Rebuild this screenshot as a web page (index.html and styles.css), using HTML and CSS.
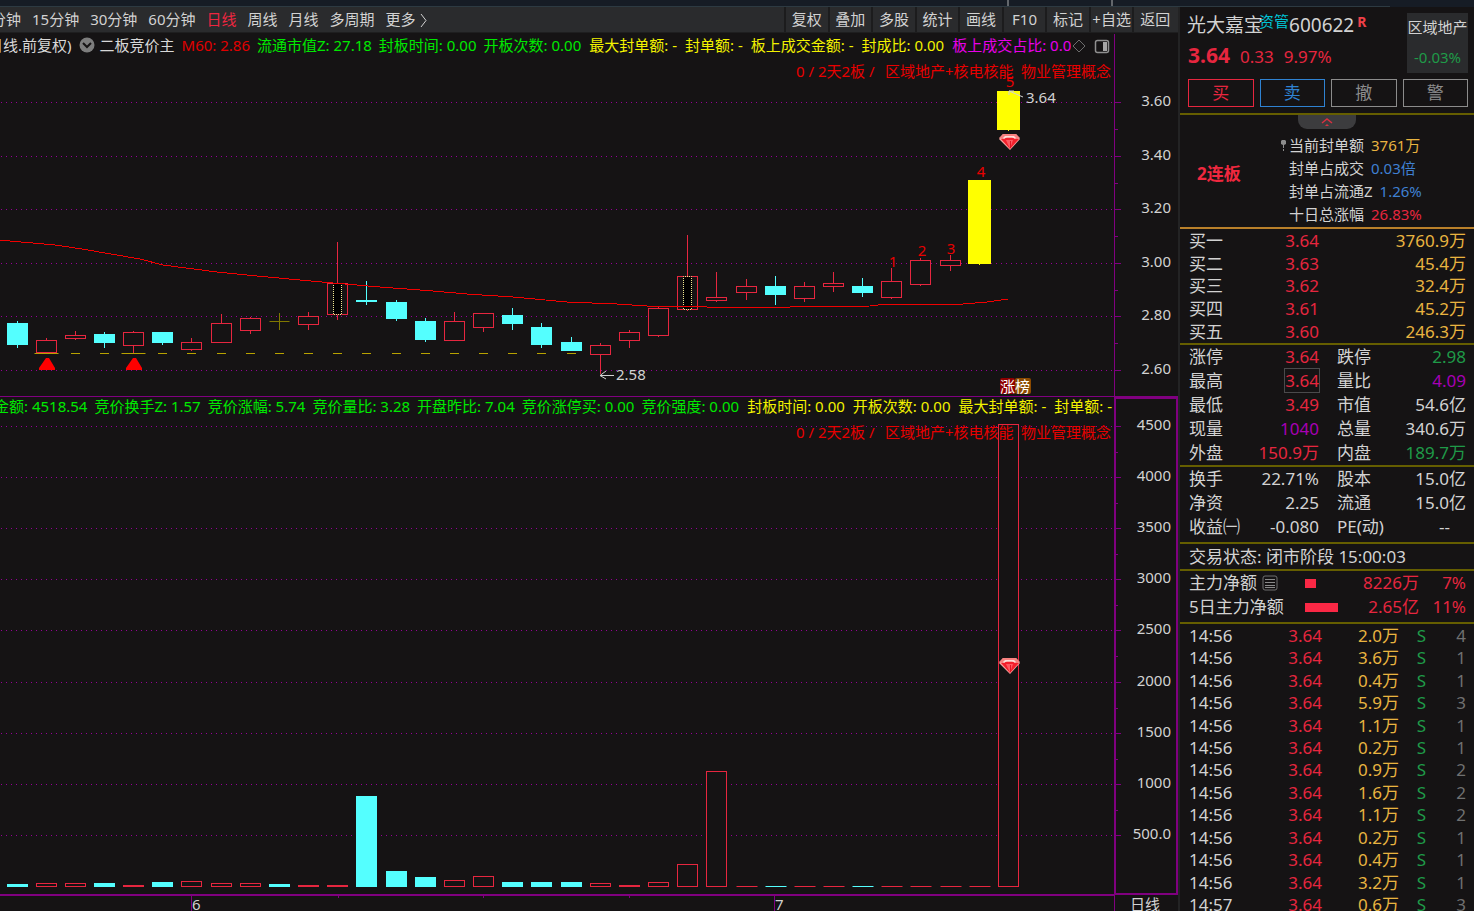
FILE: index.html
```html
<!DOCTYPE html>
<html lang="zh-CN">
<head>
<meta charset="utf-8">
<title>光大嘉宝 600622</title>
<link rel="stylesheet" href="styles.css">
</head>
<body>
<div class="app">
  <div class="strip"><div class="strip-line"><i></i><i></i></div></div>

  <main class="stage">
    <nav class="toolbar">
      <div class="periods">
        <button>分钟</button><button>15分钟</button><button>30分钟</button><button>60分钟</button><button class="active">日线</button><button>周线</button><button>月线</button><button>多周期</button><button>更多 <svg class="more" viewBox="0 0 8 15"><path d="M1 1 L6 7.500 L1 14"/></svg></button>
      </div>
      <div class="tools">
        <button>复权</button><button>叠加</button><button>多股</button><button>统计</button><button>画线</button><button>F10</button><button>标记</button><button>+自选</button><button>返回</button>
      </div>
    </nav>

    <section class="panel price">
      <svg class="plot" viewBox="0 33 1178 364" preserveAspectRatio="xMinYMin meet">
        <g id="price-grid"></g>
        <path class="frame" d="M1114.500 34V397"/>
        <path class="frame" d="M0 396.500H1178"/>
        <g id="candles"></g>
        <polyline class="ma" points="0,240 10,241 55,245 82,249 140,259 163,265 217,272 257,276 300,280 333,283 380,287 433,291 467,294 513,297 567,302 617,304 647,306 700,306 707,307 790,307 870,306 887,304 963,304 987,302 1008,299"/>
        <g id="support"></g>
        <path class="mark" d="M46 358h3l6 10v2H39v-2zM133 358h3l6 10v2h-16v-2z"/>
        <text class="caption" y="77"><tspan x="796">0 / 2天2板 /</tspan><tspan x="885">区域地产+核电核能</tspan><tspan x="1021">物业管理概念</tspan></text>
        <g class="count">
          <text x="893" y="267">1</text><text x="922" y="256">2</text><text x="951" y="254">3</text><text x="981" y="177">4</text><text x="1010" y="87">5</text>
        </g>
        <path class="arrow" d="M600 375.500H614M606 371L600 375.500L606 379"/>
        <text class="label" x="616" y="380">2.58</text>
        <path class="arrow" d="M1009 91L1023 97M1009 95V91H1014"/>
        <text class="label" x="1026" y="103">3.64</text>
        <g id="gem">
          <path fill="#f9a9a4" d="M1003 134h13l4 5-10 11-11-11z"/>
          <path fill="#f3202c" d="M1001 139l4-1h10l4 1-9 10z"/>
          <path fill="#f7817f" d="M1003 134h13l4 4-4 1-3-3h-7l-3 3-4-1z"/>
          <path fill="#ffdcd8" d="M1005 136h9l2 2-1 1-3-2h-5l-3 2-1-1z"/>
          <path fill="#ff5a62" d="M1006 140h7l-3 9z"/>
          <path fill="#e01424" d="M1010 141h1v7h-1z"/>
        </g>
        <rect x="1000" y="378" width="15" height="16" rx="2" fill="#8d0000"/>
        <rect x="1015" y="378" width="16" height="16" rx="2" fill="#8c4a00"/>
        <text class="badge" x="1000" y="392">涨榜</text>
      </svg>
      <div class="legend top">
        <div class="series">
          <span class="w cut-a">日线.前复权)</span>
          <svg class="drop" viewBox="0 0 16 16"><circle cx="8" cy="8" r="7.500" fill="#7d7d7d"/><path d="M4 6l4 4 4-4" fill="none" stroke="#151314" stroke-width="2"/></svg>
          <span class="w name">二板竞价主</span><span class="r">M60: 2.86</span><span class="g">流通市值Z: 27.18</span><span class="g">封板时间: 0.00</span><span class="g">开板次数: 0.00</span><span class="y">最大封单额: -</span><span class="y">封单额: -</span><span class="y">板上成交金额: -</span><span class="y">封成比: 0.00</span><span class="m">板上成交占比: 0.00</span>
        </div>
        <svg class="corner" viewBox="0 0 38 16"><path d="M7 2l6 6-6 6-6-6z" fill="none" stroke="#6c6c6c"/><rect x="23.500" y="2.500" width="13" height="12" rx="2" fill="none" stroke="#8f8f8f" stroke-width="1.500"/><rect x="31" y="4" width="4" height="9" fill="#a5a5a5"/></svg>
      </div>
    </section>

    <section class="panel volume">
      <svg class="plot" viewBox="0 397 1178 498" preserveAspectRatio="xMinYMin meet">
        <g id="volume-grid"></g>
        <g id="bars"></g>
        <rect class="frame thick" x="1115" y="398" width="62" height="496"/>
        <path class="frame" d="M0 894.500H1115"/>
        <text class="caption" y="438"><tspan x="796">0 / 2天2板 /</tspan><tspan x="885">区域地产+核电核能</tspan><tspan x="1021">物业管理概念</tspan></text>
        <use href="#gem" y="524"/>
      </svg>
      <div class="legend">
        <div class="series">
          <span class="g cut-b">金额: 4518.54</span><span class="g">竞价换手Z: 1.57</span><span class="g">竞价涨幅: 5.74</span><span class="g">竞价量比: 3.28</span><span class="g">开盘昨比: 7.04</span><span class="g">竞价涨停买: 0.00</span><span class="g">竞价强度: 0.00</span><span class="y">封板时间: 0.00</span><span class="y">开板次数: 0.00</span><span class="y">最大封单额: -</span><span class="y">封单额: -</span>
        </div>
      </div>
    </section>

    <svg class="plot dates" viewBox="0 895 1178 16" preserveAspectRatio="xMinYMin meet">
      <path class="frame" d="M0 895.500H1115M191.500 895V911M774.500 895V911M1114.500 895V911M338.500 895V898M483.500 895V898M629.500 895V898"/>
      <text class="label" x="192" y="910">6</text><text class="label" x="775" y="910">7</text><text class="label" x="1130" y="910">日线</text>
    </svg>
  </main>

  <aside class="side">
    <header class="quote">
      <div class="ident">
        <h1>光大嘉宝<sup class="tag">资管</sup>600622<sup class="flag">R</sup></h1>
        <p class="last"><b>3.64</b><span>0.33</span><span>9.97%</span></p>
      </div>
      <div class="sector"><span>区域地产</span><span class="down">-0.03%</span></div>
      <div class="actions"><button class="buy">买</button><button class="sell">卖</button><button>撤</button><button>警</button></div>
    </header>

    <section class="limit">
      <button class="fold" aria-label="收起"><svg viewBox="0 0 14 10"><path d="M2 6l5-4 5 4" fill="none" stroke="#d93040" stroke-width="1.500"/><path d="M5 9l2-2 2 2z" fill="#d93040"/></svg></button>
      <strong>2连板</strong>
      <ul>
        <li><svg class="pin" viewBox="0 0 5 11"><path d="M1 0h3l1 1v3L3 5v3H2V5L0 4V1zM2 9h1v2H2z"/></svg>当前封单额 <span class="gold">3761万</span></li>
        <li>封单占成交 <span class="blue">0.03倍</span></li>
        <li>封单占流通Z <span class="blue">1.26%</span></li>
        <li>十日总涨幅 <span class="up">26.83%</span></li>
      </ul>
    </section>

    <section class="block">
      <table class="bids">
        <tr><th>买一</th><td class="up">3.64</td><td class="gold">3760.9万</td></tr>
        <tr><th>买二</th><td class="up">3.63</td><td class="gold">45.4万</td></tr>
        <tr><th>买三</th><td class="up">3.62</td><td class="gold">32.4万</td></tr>
        <tr><th>买四</th><td class="up">3.61</td><td class="gold">45.2万</td></tr>
        <tr><th>买五</th><td class="up">3.60</td><td class="gold">246.3万</td></tr>
      </table>
    </section>

    <section class="block">
      <table class="stats">
        <tr><th>涨停</th><td class="up">3.64</td><th>跌停</th><td class="down">2.98</td></tr>
        <tr><th>最高</th><td class="up"><span class="boxed">3.64</span></td><th>量比</th><td class="violet">4.09</td></tr>
        <tr><th>最低</th><td class="up">3.49</td><th>市值</th><td>54.6亿</td></tr>
        <tr><th>现量</th><td class="violet">1040</td><th>总量</th><td>340.6万</td></tr>
        <tr><th>外盘</th><td class="up">150.9万</td><th>内盘</th><td class="down">189.7万</td></tr>
      </table>
    </section>

    <section class="block extra">
      <table class="stats">
        <tr><th>换手</th><td>22.71%</td><th>股本</th><td>15.0亿</td></tr>
        <tr><th>净资</th><td>2.25</td><th>流通</th><td>15.0亿</td></tr>
        <tr><th>收益㈠</th><td>-0.080</td><th>PE(动)</th><td class="none">--</td></tr>
      </table>
    </section>

    <p class="block status">交易状态: 闭市阶段 15:00:03</p>

    <section class="block extra">
      <table class="flow">
        <tr><th>主力净额<svg class="note" viewBox="0 0 16 16"><rect x="1" y="1" width="14" height="14" rx="2" fill="none" stroke="#6f6f6f"/><path d="M3 4.500h10M3 7.500h10M3 10.500h10M3 12.500h10" stroke="#8a8a8a"/></svg></th><td class="meter"><i style="width:11px"></i></td><td>8226万</td><td>7%</td></tr>
        <tr><th>5日主力净额</th><td class="meter"><i style="width:33px"></i></td><td>2.65亿</td><td>11%</td></tr>
      </table>
    </section>

    <section class="block ticks">
      <table class="trades">
        <tr><th>14:56</th><td>3.64</td><td>2.0万</td><td>S</td><td>4</td></tr>
        <tr><th>14:56</th><td>3.64</td><td>3.6万</td><td>S</td><td>1</td></tr>
        <tr><th>14:56</th><td>3.64</td><td>0.4万</td><td>S</td><td>1</td></tr>
        <tr><th>14:56</th><td>3.64</td><td>5.9万</td><td>S</td><td>3</td></tr>
        <tr><th>14:56</th><td>3.64</td><td>1.1万</td><td>S</td><td>1</td></tr>
        <tr><th>14:56</th><td>3.64</td><td>0.2万</td><td>S</td><td>1</td></tr>
        <tr><th>14:56</th><td>3.64</td><td>0.9万</td><td>S</td><td>2</td></tr>
        <tr><th>14:56</th><td>3.64</td><td>1.6万</td><td>S</td><td>2</td></tr>
        <tr><th>14:56</th><td>3.64</td><td>1.1万</td><td>S</td><td>2</td></tr>
        <tr><th>14:56</th><td>3.64</td><td>0.2万</td><td>S</td><td>1</td></tr>
        <tr><th>14:56</th><td>3.64</td><td>0.4万</td><td>S</td><td>1</td></tr>
        <tr><th>14:56</th><td>3.64</td><td>3.2万</td><td>S</td><td>1</td></tr>
        <tr><th>14:57</th><td>3.64</td><td>0.6万</td><td>S</td><td>3</td></tr>
      </table>
    </section>
  </aside>
</div>
<script src="chart.js"></script>
</body>
</html>
```

FILE: styles.css
```css
* { box-sizing: border-box; margin: 0; padding: 0; }

body {
  background: #151314;
  color: #d2d2d2;
  font: 15px/22px "Noto Sans", "Noto Sans CJK SC", sans-serif;
  overflow: hidden;
}

button { background: none; border: 0; color: inherit; font: inherit; white-space: nowrap; cursor: pointer; }
svg { display: block; }
li { list-style: none; }
th { font-weight: 400; text-align: left; }
table { width: 100%; border-collapse: collapse; table-layout: fixed; }

.app {
  display: grid;
  grid-template: 7px minmax(0, 1fr) / minmax(0, 1fr) 296px;
  height: 100vh;
}

.strip { grid-column: 1 / -1; background: #161c25; }
.strip-line {
  display: flex;
  justify-content: flex-end;
  gap: 102px;
  height: 7px;
  margin-right: 84px;
  padding-right: 277px;
  border-bottom: 1px solid #2d3a42;
}
.strip-line i { width: 2px; height: 6px; background: #62666b; }

/* chart side */
.stage { display: grid; grid-template-rows: 26px minmax(0, 364fr) minmax(0, 498fr) 16px; min-width: 0; }

.toolbar {
  display: flex;
  justify-content: space-between;
  padding-right: 2px;
  background: #2a2b2d;
  border-bottom: 1px solid #1e1e1f;
  line-height: 20px;
  overflow: hidden;
}
.periods { display: flex; gap: 11px; margin-left: -9px; }
.periods .active { color: #ee2640; }
.more { display: inline-block; width: 8px; height: 15px; vertical-align: -3px; fill: none; stroke: #d2d2d2; }
.tools { display: grid; grid-template-columns: repeat(9, 1fr); width: 392px; }
.tools button { border-left: 2px solid #1c1c1d; }
.toolbar button { padding-bottom: 1px; }

.panel { display: grid; min-height: 0; }
.panel > * { grid-area: 1 / 1; }
.plot { width: 100%; height: 100%; min-height: 0; font-size: 15px; }

.legend {
  display: flex;
  align-self: start;
  margin-right: 64px;
  line-height: 19px;
  white-space: nowrap;
  z-index: 1;
  min-width: 0;
}
.legend.top { line-height: 24px; }
.series { display: flex; flex: 1; gap: 7px; min-width: 0; overflow: hidden; align-items: center; }
.series > * { flex: none; }
.cut-a { margin-left: -12px; }
.cut-b { margin-left: -6px; }
.name { margin-left: -2px; }
.drop { width: 16px; height: 16px; }
.corner { width: 38px; height: 16px; margin: 5px 4px 0 1px; }
.w { color: #d8d8d8; }
.r { color: #e00000; }
.g { color: #00e800; }
.y { color: #f2f200; padding-left: 1px; }
.m { color: #e800e8; padding-left: 1px; }

.frame { fill: none; stroke: #800080; }
.thick { stroke-width: 2; }
.gridline { stroke: #960096; stroke-dasharray: 1 4; }
.ma { fill: none; stroke: #f00000; stroke-width: 1; shape-rendering: crispEdges; }
.mark { fill: #ff0000; }
.caption { fill: #e80000; }
.count { fill: #e80000; text-anchor: middle; }
.label { fill: #d2d2d2; }
.axis { fill: #d2d2d2; text-anchor: end; }
.arrow { fill: none; stroke: #d2d2d2; }
.badge { fill: #ffffff; }
.rise { fill: #151314; stroke: #e6263f; }
.fall { fill: #54ffff; stroke: #54ffff; }
.surge { fill: #ffff00; stroke: #ffff00; }
.flat { fill: none; stroke: #807800; }
.inner { fill: #000000; stroke: #f0e890; stroke-dasharray: 1 1; stroke-dashoffset: 0.5; }
.base { stroke: #b8a200; }

/* quote side */
.side { border-left: 2px solid #232324; font-size: 17px; min-width: 0; overflow: hidden; }
.up { color: #e6263f; }
.down { color: #1f9a48; }
.gold { color: #e9b440; }
.blue { color: #3f80d2; }
.violet { color: #a800b4; }

.quote {
  display: grid;
  grid-template-columns: 1fr 61px;
  grid-template-rows: 60px 28px;
  height: 106px;
  padding: 6px 6px 0 7px;
  row-gap: 6px;
}
.quote h1 { height: 28px; font-size: 19px; font-weight: 400; line-height: 24px; white-space: nowrap; }
.quote sup { line-height: 0; vertical-align: 5px; }
.tag { margin-left: -4px; color: #00c4d4; font-size: 15px; }
.flag { margin-left: 3px; color: #f04048; font-size: 14px; font-weight: 700; }
.last { display: flex; gap: 10px; align-items: baseline; color: #e6263f; line-height: 28px; padding-left: 1px; }
.last b { font-size: 21px; }
.sector { display: flex; flex-direction: column; justify-content: space-between; height: 60px; padding: 3px 0 5px; background: #2a2b2d; font-size: 15px; text-align: center; white-space: nowrap; }
.actions { grid-column: 1 / -1; display: flex; gap: 6px; height: 28px; padding-left: 1px; }
.actions button { flex: 1; border: 1px solid #8c8c8c; color: #8c8c8c; line-height: 24px; }
.actions .buy { border-color: #e6263f; color: #e6263f; }
.actions .sell { border-color: #2f82d2; color: #2f82d2; }

.limit {
  position: relative;
  display: grid;
  grid-template-columns: 82px 1fr;
  align-items: center;
  padding: 18px 0 0 27px;
  border-top: 2px solid #655e00;
  height: 114px;
  font-size: 15px;
}
.limit strong { margin-left: -10px; padding-bottom: 12px; color: #f0283f; font-size: 17px; }
.limit li { display: flex; gap: 7px; position: relative; line-height: 23px; white-space: nowrap; }
.fold { position: absolute; top: 0; left: 118px; width: 58px; height: 14px; border-radius: 0 0 9px 9px; background: #3c3c3e; }
.fold svg { width: 14px; height: 10px; margin: 0 auto; }
.pin { position: absolute; left: -8px; top: 6px; width: 5px; height: 11px; fill: #8c8c8c; }

.block { border-top: 2px solid #655e00; padding: 0 8px 0 9px; }
.limit + .block { border-color: #b9802a; }
.bids { height: 114px; line-height: 21px; }
.bids td, .stats td, .flow td { text-align: right; }
.bids th { width: 60px; }
.bids td:nth-child(2) { width: 70px; }
.stats td, .stats th { line-height: 24px; height: 24px; white-space: nowrap; }
.stats th:nth-child(1) { width: 54px; }
.stats td:nth-child(2) { width: 76px; }
.stats th:nth-child(3) { width: 71px; padding-left: 18px; }
.stats .none { padding-right: 16px; }
.boxed { outline: 1px solid #4a4a4c; }
.extra { padding-bottom: 3px; }
.status { line-height: 25px; }
.flow th, .flow td { line-height: 24px; white-space: nowrap; }
.flow td { color: #e6263f; }
.flow th { width: 116px; }
.flow .meter { width: 45px; text-align: left; }
.flow td:nth-child(3) { width: 69px; }
.meter i { display: block; height: 9px; background: #fa2845; }
.note { display: inline-block; width: 16px; height: 16px; margin-left: 5px; vertical-align: -2px; }
.trades { height: 292px; line-height: 21px; }
.trades th { width: 60px; }
.trades td { text-align: right; }
.trades td:nth-child(2) { width: 73px; color: #e6263f; }
.trades td:nth-child(3) { width: 77px; color: #e9b440; }
.trades td:nth-child(4) { width: 27px; color: #1f9a48; }
.trades td:nth-child(5) { color: #707070; }
```

FILE: chart.js
```js
const NS = "http://www.w3.org/2000/svg";
const add = (parent, name, attrs, text) => {
  const el = document.createElementNS(NS, name);
  for (const key in attrs) el.setAttribute(key, attrs[key]);
  if (text) el.textContent = text;
  parent.appendChild(el);
};
const byId = (id) => document.getElementById(id);
const column = (i) => Math.floor(18 + i * 29.16) - 0.5;

function grid(id, labels, first, step) {
  const g = byId(id);
  labels.forEach((label, i) => {
    const y = Math.round(first + i * step) + 0.5;
    add(g, "path", { class: "gridline", d: `M1 ${y}H1114` });
    add(g, "path", { class: "frame", d: `M1115 ${y}h6` });
    if (i < labels.length - 1) {
      add(g, "path", { class: "frame", d: `M1115 ${Math.round(y + step / 2) + 0.5}h3` });
    }
    add(g, "text", { class: "axis", x: 1171, y: y + 3.5 }, label);
  });
}
grid("price-grid", ["3.60", "3.40", "3.20", "3.00", "2.80", "2.60"], 102, 53.5);
grid("volume-grid", ["4500", "4000", "3500", "3000", "2500", "2000", "1500", "1000", "500.0"], 426, 51.1);

// kind, body top, body bottom, wick top, wick bottom
const candles = [
  ["fall", 323, 344, 321, 348], ["rise", 340, 352, 338, 353], ["rise", 335, 338, 331, 340],
  ["fall", 334, 342, 332, 348], ["rise", 332, 345, 331, 353], ["fall", 332, 342, 332, 345],
  ["rise", 342, 349, 338, 351], ["rise", 323, 342, 314, 342], ["rise", 318, 330, 317, 334],
  ["flat", 321, 321, 313, 330], ["rise", 316, 324, 312, 330], ["rise", 283, 314, 242, 320],
  ["fall", 300, 301, 281, 305], ["fall", 302, 318, 300, 321], ["fall", 321, 339, 318, 342],
  ["rise", 321, 340, 312, 340], ["rise", 313, 327, 313, 332], ["fall", 315, 323, 308, 330],
  ["fall", 327, 344, 323, 348], ["fall", 342, 350, 337, 350], ["rise", 345, 354, 343, 374],
  ["rise", 332, 340, 330, 348], ["rise", 308, 335, 307, 337], ["rise", 276, 309, 235, 311],
  ["rise", 297, 300, 272, 302], ["rise", 286, 292, 279, 300], ["fall", 286, 294, 276, 305],
  ["rise", 286, 298, 282, 302], ["rise", 283, 286, 272, 292], ["fall", 286, 292, 278, 297],
  ["rise", 281, 297, 268, 299], ["rise", 260, 284, 258, 286], ["rise", 260, 265, 255, 271],
  ["surge", 180, 263, 180, 265], ["surge", 91, 129, 91, 131]
];
candles.forEach(([kind, top, bottom, high, low], i) => {
  const g = byId("candles");
  const x = column(i);
  const half = kind === "surge" ? 11 : 10;
  add(g, "path", { class: kind, d: `M${x} ${high}V${low}` });
  if (kind === "flat") {
    add(g, "path", { class: kind, d: `M${x - half} ${top + 0.5}h${half * 2}` });
  } else {
    add(g, "rect", { class: kind, x: x - half, y: top + 0.5, width: half * 2, height: bottom - top });
  }
  if (i === 11 || i === 23) {
    add(g, "rect", { class: "inner", x: x - 4, y: top + 0.5, width: 8, height: bottom - top });
  }
  if (i > 0 && i < 20) {
    const reach = i === 1 || i === 4 ? 12 : 4.5;
    add(byId("support"), "path", { class: "base", d: `M${x - reach} 353.5h${reach * 2}` });
  }
});

// kind, bar top
const bars = [
  ["fall", 884], ["rise", 883], ["rise", 883], ["fall", 883], ["rise", 885], ["fall", 882], ["rise", 881],
  ["rise", 883], ["rise", 883], ["fall", 884], ["rise", 885], ["rise", 885], ["fall", 796], ["fall", 871],
  ["fall", 877], ["rise", 880], ["rise", 876], ["fall", 882], ["fall", 882], ["fall", 882], ["rise", 883],
  ["rise", 885], ["rise", 882], ["rise", 864], ["rise", 771], ["rise", 886], ["fall", 886], ["rise", 886],
  ["rise", 886], ["fall", 886], ["rise", 886], ["rise", 886], ["rise", 886], ["rise", 886], ["rise", 424]
];
bars.forEach(([kind, top], i) => {
  const x = column(i);
  const g = byId("bars");
  if (top === 886) add(g, "path", { class: kind, d: `M${x - 10} 886.500h21` });
  else add(g, "rect", { class: kind, x: x - 10, y: top + 0.5, width: 20, height: 886 - top });
});
```
